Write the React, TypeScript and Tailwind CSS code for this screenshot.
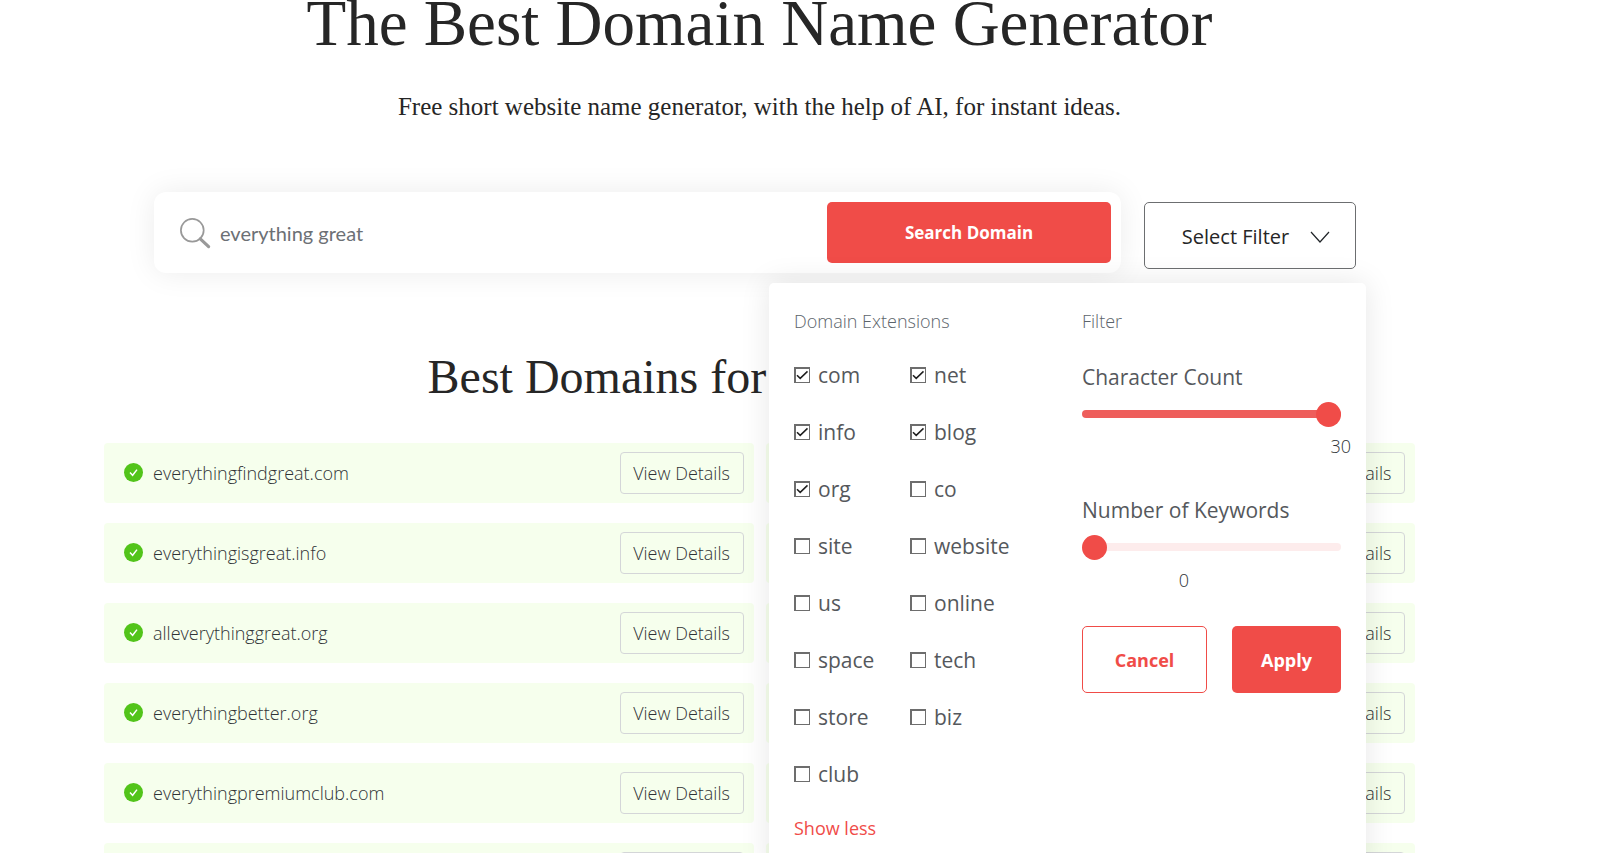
import { useState } from "react";

const DOMAINS = [
  "everythingfindgreat.com",
  "everythingisgreat.info",
  "alleverythinggreat.org",
  "everythingbetter.org",
  "everythingpremiumclub.com",
  "everythinggreatonline.com",
];

const MORE_DOMAINS = [
  "greateverything.net",
  "everythinggreat.blog",
  "trueeverythinggreat.com",
  "everythinggreathub.net",
  "geteverythinggreat.com",
  "everythinggreatshop.org",
];

const EXTENSIONS = [
  ["com", "info", "org", "site", "us", "space", "store", "club"],
  ["net", "blog", "co", "website", "online", "tech", "biz"],
];

function AvailableIcon() {
  return (
    <svg viewBox="0 0 19 19" className="mb-0.5 size-[19px] shrink-0" aria-hidden="true">
      <circle cx="9.5" cy="9.5" r="9.5" fill="#52c41a" />
      <path d="M6 9.6l2.6 2.7L13 6.6" fill="none" stroke="#fff" strokeWidth="1.5" />
    </svg>
  );
}

function DomainRow({ name }: { name: string }) {
  return (
    <li className="flex h-[60px] items-center rounded-[4px] bg-[#f6ffed] pr-[10px] pl-5">
      <AvailableIcon />
      <span className="ml-[10px] grow text-lg font-light text-[#303336]">{name}</span>
      <button className="h-[42px] w-[124px] rounded-[4px] border border-[#d4d6d8] text-lg font-light text-[#303336]">
        View Details
      </button>
    </li>
  );
}

function ExtensionOption({
  name,
  checked,
  onToggle,
}: {
  name: string;
  checked: boolean;
  onToggle: () => void;
}) {
  return (
    <label className="flex h-[57px] items-center gap-2 text-[21px] font-medium text-[#55585c]">
      <span className="mb-0.5 grid">
        <input
          type="checkbox"
          checked={checked}
          onChange={onToggle}
          className="col-start-1 row-start-1 size-4 appearance-none border border-t-2 border-l-2 border-[#6d6d6d] bg-white"
        />
        {checked && (
          <svg viewBox="0 0 16 16" className="pointer-events-none col-start-1 row-start-1 size-4" aria-hidden="true">
            <path d="M3 8.2l3.2 3.2 7.3-7" fill="none" stroke="#1f1f1f" strokeWidth="1.5" />
          </svg>
        )}
      </span>
      {name}
    </label>
  );
}

function RangeInput({
  id,
  value,
  max,
  onChange,
}: {
  id: string;
  value: number;
  max: number;
  onChange: (value: number) => void;
}) {
  const percent = (value / max) * 100;
  return (
    <input
      id={id}
      type="range"
      min={0}
      max={max}
      value={value}
      onChange={(event) => onChange(Number(event.target.value))}
      style={{
        backgroundImage: `linear-gradient(to right, #ee5e5b ${percent}%, #fdecec ${percent}%)`,
      }}
      className="block h-2 w-full appearance-none rounded-full [&::-webkit-slider-thumb]:size-[25px] [&::-webkit-slider-thumb]:appearance-none [&::-webkit-slider-thumb]:rounded-full [&::-webkit-slider-thumb]:bg-[#f04c48]"
    />
  );
}

function FilterPanel() {
  const [selected, setSelected] = useState(["com", "info", "org", "net", "blog"]);
  const [characters, setCharacters] = useState(30);
  const [keywords, setKeywords] = useState(0);

  const toggle = (name: string) =>
    setSelected((current) =>
      current.includes(name) ? current.filter((item) => item !== name) : [...current, name],
    );

  return (
    <div className="absolute top-[81px] -right-[10px] z-10 flex w-[597px] rounded-[5px] bg-white px-[25px] pt-6 pb-8 shadow-[0_0_30px_rgba(0,0,0,0.1)]">
      <fieldset className="w-[288px]">
        <legend className="text-lg leading-7 font-light text-[#5c646b]">Domain Extensions</legend>
        <div className="mt-3 flex">
          {EXTENSIONS.map((column, index) => (
            <div key={index} className="w-[116px]">
              {column.map((name) => (
                <ExtensionOption
                  key={name}
                  name={name}
                  checked={selected.includes(name)}
                  onToggle={() => toggle(name)}
                />
              ))}
            </div>
          ))}
        </div>
        <button className="mt-[11px] text-lg leading-7 font-normal text-[#f04c48]">Show less</button>
      </fieldset>

      <div className="grow">
        <h3 className="text-lg leading-7 font-light text-[#5c646b]">Filter</h3>
        <label htmlFor="characters" className="mt-[26px] block text-[21px] leading-8 font-medium text-[#55585c]">
          Character Count
        </label>
        <div className="mt-[17px]">
          <RangeInput id="characters" value={characters} max={30} onChange={setCharacters} />
        </div>
        <output htmlFor="characters" className="-mr-[10px] mt-[14px] block text-right text-lg leading-7 font-light text-[#303336]">
          {characters}
        </output>
        <label htmlFor="keywords" className="mt-[34px] block text-[21px] leading-8 font-medium text-[#55585c]">
          Number of Keywords
        </label>
        <div className="mt-[17px]">
          <RangeInput id="keywords" value={keywords} max={10} onChange={setKeywords} />
        </div>
        <output htmlFor="keywords" className="mt-[15px] block w-[204px] text-center text-lg leading-7 font-light text-[#303336]">
          {keywords}
        </output>
        <div className="mt-8 flex justify-between">
          <button className="h-[67px] w-[125px] rounded-[5px] border border-[#f04c48] text-lg font-bold text-[#f04c48]">
            Cancel
          </button>
          <button className="h-[67px] w-[109px] rounded-[5px] bg-[#f04c48] text-lg font-bold text-white">
            Apply
          </button>
        </div>
      </div>
    </div>
  );
}

export default function App() {
  const [query, setQuery] = useState("everything great");

  return (
    <main className="min-h-screen overflow-hidden bg-white pr-[185px] pb-10 pl-[104px] font-['Open_Sans','Noto_Sans',sans-serif] text-[#262626]">
      <header className="text-center font-['Liberation_Serif',serif]">
        <h1 className="text-[65px] leading-[46px] whitespace-nowrap">The Best Domain Name Generator</h1>
        <p className="mt-[45px] text-[25px] leading-8">
          Free short website name generator, with the help of AI, for instant ideas.
        </p>
      </header>

      <div className="mt-[69px] flex gap-[23px] pr-[59px] pl-[50px]">
        <form
          onSubmit={(event) => event.preventDefault()}
          className="flex h-[81px] grow items-start rounded-[12px] bg-white pt-[10px] pr-[10px] pl-[26px] shadow-[0_0_30px_rgba(0,0,0,0.08)]"
        >
          <svg viewBox="0 0 31 31" className="mt-4 size-[31px] shrink-0" fill="none" stroke="#999" aria-hidden="true">
            <circle cx="12.3" cy="12.3" r="11.4" strokeWidth="1.7" />
            <path d="M20.3 20.8l8.3 7.8" strokeWidth="3.2" strokeLinecap="round" />
          </svg>
          <input
            aria-label="Keywords"
            value={query}
            onChange={(event) => setQuery(event.target.value)}
            className="ml-[9px] h-[61px] min-w-0 grow font-[Lato,sans-serif] text-xl text-[#6c7075] outline-none"
          />
          <button className="h-[61px] w-[284px] rounded-[5px] bg-[#f04c48] text-[17px] font-bold text-white">
            Search Domain
          </button>
        </form>

        <div className="relative mt-[10px]">
          <button className="flex h-[67px] w-[212px] items-center justify-center gap-[21px] rounded-[5px] border border-[#6c6e70] bg-white pt-0.5 pl-3 text-xl font-medium">
            Select Filter
            <svg viewBox="0 0 20 12" className="h-3 w-5" fill="none" stroke="#212529" strokeWidth="1.2" aria-hidden="true">
              <path d="M1 1l9 10 9-10" />
            </svg>
          </button>
          <FilterPanel />
        </div>
      </div>

      <h2 className="mt-[79px] text-center font-['Liberation_Serif',serif] text-5xl leading-[50px] whitespace-nowrap">
        Best Domains for everything great
      </h2>
      <div className="mt-[41px] grid grid-cols-2 gap-x-3">
        {[DOMAINS, MORE_DOMAINS].map((list, index) => (
          <ul key={index} className="space-y-5">
            {list.map((name) => (
              <DomainRow key={name} name={name} />
            ))}
          </ul>
        ))}
      </div>
    </main>
  );
}
